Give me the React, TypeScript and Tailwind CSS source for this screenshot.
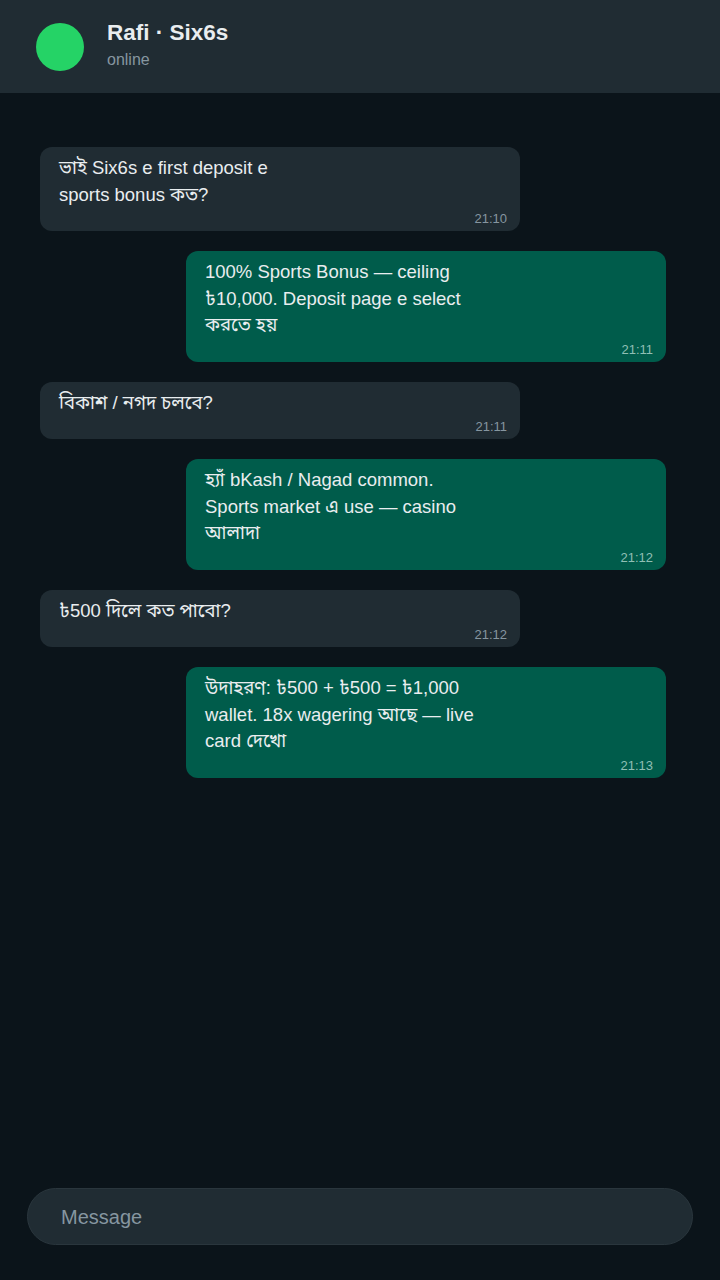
import React from 'react'

interface Msg {
  out: boolean
  lines: string[]
  time: string
}

const messages: Msg[] = [
  { out: false, lines: ['ভাই Six6s e first deposit e', 'sports bonus কত?'], time: '21:10' },
  {
    out: true,
    lines: ['100% Sports Bonus — ceiling', '৳10,000. Deposit page e select', 'করতে হয়'],
    time: '21:11',
  },
  { out: false, lines: ['বিকাশ / নগদ চলবে?'], time: '21:11' },
  {
    out: true,
    lines: ['হ্যাঁ bKash / Nagad common.', 'Sports market এ use — casino', 'আলাদা'],
    time: '21:12',
  },
  { out: false, lines: ['৳500 দিলে কত পাবো?'], time: '21:12' },
  {
    out: true,
    lines: ['উদাহরণ: ৳500 + ৳500 = ৳1,000', 'wallet. 18x wagering আছে — live', 'card দেখো'],
    time: '21:13',
  },
]

function Bubble({ msg }: { msg: Msg }) {
  return (
    <div className={msg.out ? 'flex justify-end' : 'flex justify-start'}>
      <div
        className={
          'w-[480px] rounded-[12px] pl-[19px] pr-[13px] pt-2 pb-1 ' +
          (msg.out ? 'bg-[#005c4b]' : 'bg-[#202c33]')
        }
      >
        <div className="text-[18.5px] leading-[26.5px] text-[#e9edef]">
          {msg.lines.map((l, i) => (
            <div key={i}>{l}</div>
          ))}
        </div>
        <div
          className={
            'mt-[3px] text-right text-[13px] leading-4 ' +
            (msg.out ? 'text-[#8fbfb4]' : 'text-[#8696a0]')
          }
        >
          {msg.time}
        </div>
      </div>
    </div>
  )
}

export default function App() {
  return (
    <div
      className="flex h-[1280px] w-[720px] flex-col bg-[#0b141a]"
      style={{ fontFamily: '"Liberation Sans", "Noto Sans Bengali", "Noto Sans", sans-serif' }}
    >
      <header className="flex h-[93px] shrink-0 items-center gap-[23px] bg-[#202c33] pb-[3px] pl-9">
        <div className="mt-[3px] h-12 w-12 rounded-full bg-[#25d366]" />
        <div className="flex flex-col">
          <span className="text-[22.5px] font-bold leading-[26px] text-[#e9edef]">Rafi · Six6s</span>
          <span className="mt-1 text-[16px] leading-[20px] text-[#8696a0]">online</span>
        </div>
      </header>

      <main className="flex flex-1 flex-col gap-5 pl-10 pr-[54px] pt-[54px]">
        {messages.map((m, i) => (
          <Bubble key={i} msg={m} />
        ))}
      </main>

      <footer className="shrink-0 px-[27px] pb-[35px]">
        <div className="flex h-[57px] items-center rounded-full border border-[#2a363d] bg-[#202c33] pl-[33px]">
          <input
            className="w-full bg-transparent text-[20px] text-[#e9edef] outline-none placeholder:text-[#8696a0]"
            placeholder="Message"
          />
        </div>
      </footer>
    </div>
  )
}
